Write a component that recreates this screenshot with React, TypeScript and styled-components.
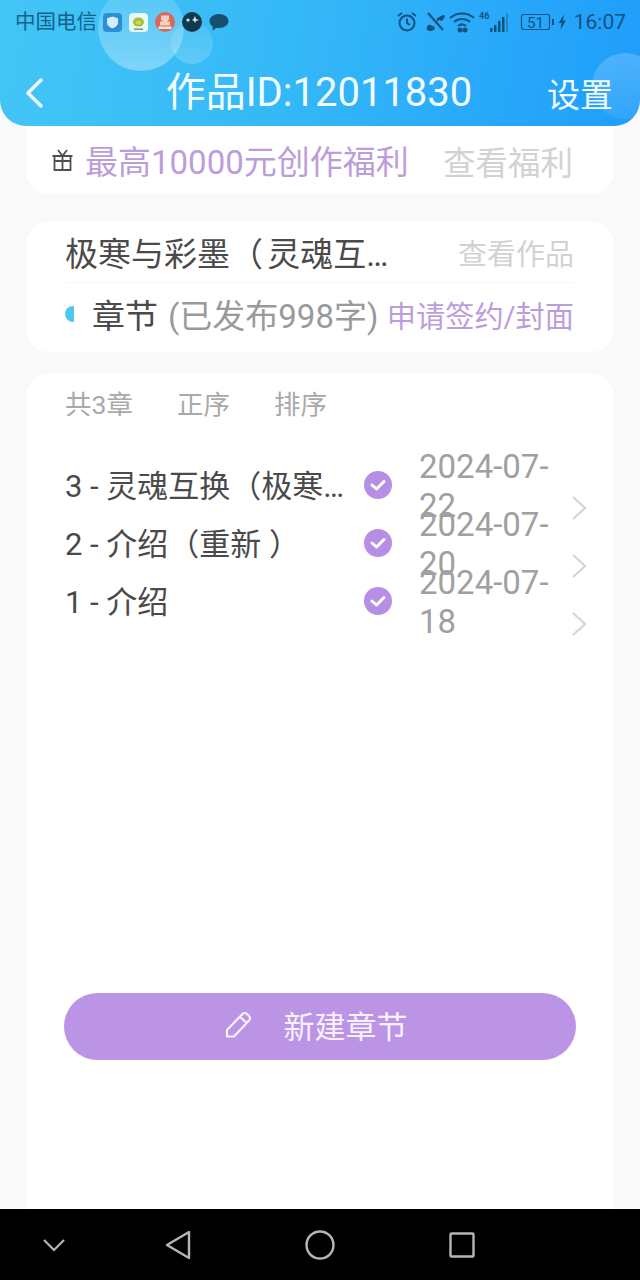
import { createGlobalStyle, styled } from 'styled-components';

const GlobalStyle = createGlobalStyle`
  html, body {
    margin: 0;
    padding: 0;
    background: #f9f9f9;
  }

  * {
    box-sizing: border-box;
  }
`;

const Page = styled.div`
  display: flex;
  flex-direction: column;
  width: 640px;
  height: 1280px;
  overflow: hidden;
  background: #f9f9f9;
  font-family: Roboto, 'Noto Sans CJK SC', sans-serif;
`;

const Header = styled.header`
  position: relative;
  z-index: 1;
  flex: none;
  height: 126px;
  overflow: hidden;
  border-radius: 0 0 26px 26px;
  background: linear-gradient(100deg, #43c6f5 0%, #35b8f7 45%, #1f9dfb 100%);
`;

const Bubble = styled.div<{ $size: number; $top: number; $left: number; $from: number; $to: number }>`
  position: absolute;
  top: ${(p) => p.$top}px;
  left: ${(p) => p.$left}px;
  width: ${(p) => p.$size}px;
  height: ${(p) => p.$size}px;
  border-radius: 50%;
  background: linear-gradient(180deg, rgba(255, 255, 255, ${(p) => p.$from}), rgba(255, 255, 255, ${(p) => p.$to}));
`;

const StatusBar = styled.div`
  position: relative;
  display: flex;
  align-items: center;
  height: 44px;
  padding: 0 14px 0 15px;
  color: #14618c;
`;

const Carrier = styled.span`
  margin-right: 6px;
  font-size: 20.500px;
  line-height: 42px;
`;

const AppIcons = styled.div`
  display: flex;
  align-items: center;
  gap: 7px;
`;

const StatusRight = styled.div`
  display: flex;
  align-items: center;
  margin-left: auto;
  color: #12527f;
`;

const Clock = styled.span`
  margin-left: 8px;
  font-size: 21px;
`;

const TitleRow = styled.div`
  position: relative;
  display: grid;
  grid-template-columns: 1fr auto 1fr;
  align-items: center;
  height: 48px;
  margin-top: 25px;
  padding: 0 27px 0 25px;
  color: #f2fbff;
`;

const Title = styled.h1`
  margin: 0;
  font-size: 40px;
  font-weight: 400;
  line-height: 48px;
`;

const Settings = styled.span`
  justify-self: end;
  font-size: 33px;
`;

const Card = styled.section`
  margin: 0 26px;
  border-radius: 24px;
  background: #fff;
`;

const BenefitCard = styled(Card)`
  display: flex;
  flex: none;
  align-items: center;
  height: 92px;
  margin-top: -24px;
  padding: 24px 41px 0 26px;
`;

const BenefitText = styled.span`
  margin-left: 12px;
  color: #bb9ddb;
  font-size: 33px;
  white-space: nowrap;
`;

const MutedLink = styled.span<{ $size: number }>`
  margin-left: auto;
  color: #d2d2d2;
  font-size: ${(p) => p.$size}px;
  white-space: nowrap;
`;

const WorkCard = styled(Card)`
  flex: none;
  height: 131px;
  margin-top: 27px;
  padding: 0 40px 0 39px;
`;

const WorkRow = styled.div`
  display: flex;
  align-items: center;
  height: 62px;
  border-bottom: 1px solid #f8f8f8;
`;

const WorkTitle = styled.span`
  color: #4a4a4a;
  font-size: 33px;
  word-spacing: -4px;
  white-space: nowrap;
`;

const ChapterRow = styled.div`
  display: flex;
  align-items: center;
  height: 62px;
  white-space: nowrap;
`;

const HalfDot = styled.span`
  width: 9px;
  height: 16px;
  border-radius: 8px 0 0 8px;
  background: #4fc8ee;
`;

const ChapterLabel = styled.span`
  margin-left: 18px;
  color: #4a4a4a;
  font-size: 33px;
`;

const ChapterCount = styled.span`
  margin-left: 10px;
  color: #9a9a9a;
  font-size: 33px;
`;

const SignLink = styled.span`
  margin-left: auto;
  color: #bb9ddb;
  font-size: 29.200px;
`;

const ChapterCard = styled(Card)`
  display: flex;
  flex: 1;
  flex-direction: column;
  margin-top: 21px;
  padding: 0 38px;
  border-bottom-left-radius: 0;
  border-bottom-right-radius: 0;
`;

const SortBar = styled.div`
  display: flex;
  align-items: center;
  gap: 44px;
  height: 58px;
  padding-left: 1px;
  color: #a9a9a9;
  font-size: 26.500px;
`;

const ChapterList = styled.div`
  display: flex;
  flex-direction: column;
  margin: 26px -12px 0 0;
`;

const ChapterItem = styled.div`
  display: flex;
  height: 58px;
  padding-left: 1px;
`;

const ChapterName = styled.span`
  flex: none;
  width: 299px;
  color: #4a4a4a;
  font-size: 31px;
  line-height: 60px;
  white-space: nowrap;
`;

const CheckBadge = styled.svg`
  flex: none;
  width: 28px;
  height: 28px;
  margin-top: 14px;
`;

const DateText = styled.span`
  flex: none;
  width: 138px;
  margin: -10px 0 0 27px;
  color: #a0a0a0;
  font-size: 33px;
  line-height: 39px;
`;

const Chevron = styled.svg`
  flex: none;
  width: 17px;
  height: 26px;
  margin: 38px 0 0 14px;
`;

const NewChapterButton = styled.button`
  display: flex;
  align-items: center;
  justify-content: center;
  gap: 31px;
  width: 512px;
  height: 67px;
  margin-top: auto;
  margin-bottom: 149px;
  padding: 0 8px 4px 0;
  border: 0;
  border-radius: 34px;
  background: #bc94e6;
  color: #f7f1fd;
  font-family: inherit;
  font-size: 31px;
`;

const NavBar = styled.nav`
  display: grid;
  flex: none;
  grid-template-columns: 107px 142px 142px 142px;
  align-items: center;
  justify-items: center;
  height: 71px;
  background: #000;
`;

const items = [
  { name: '3 - 灵魂互换（极寒…', date: '2024-07-22' },
  { name: '2 - 介绍（重新 ）', date: '2024-07-20' },
  { name: '1 - 介绍', date: '2024-07-18' },
];

const App = () => (
  <Page>
    <GlobalStyle />
    <Header>
      <Bubble $size={86} $top={-15} $left={98} $from={0.1} $to={0.34} />
      <Bubble $size={42} $top={22} $left={171} $from={0.08} $to={0.2} />
      <Bubble $size={66} $top={53} $left={592} $from={0.2} $to={0.08} />
      <StatusBar>
        <Carrier>中国电信</Carrier>
        <AppIcons>
          <svg width="19" height="19" viewBox="0 0 19 19">
            <rect width="19" height="19" rx="4" fill="#2c8fd6" />
            <path d="M9.500 3.500l5.500 1.800v4.200c0 3-2.600 4.800-5.500 5.800-2.900-1-5.500-2.800-5.500-5.800V5.300z" fill="#d6ecfa" />
          </svg>
          <svg width="19" height="19" viewBox="0 0 19 19">
            <rect width="19" height="19" rx="4" fill="#e8f8f4" />
            <ellipse cx="9.500" cy="9" rx="5.500" ry="4.500" fill="#9cc23e" />
            <ellipse cx="9.500" cy="9.500" rx="3" ry="2" fill="#e6c94a" />
            <rect x="5" y="15.500" width="9" height="1.300" fill="#5a8a70" />
          </svg>
          <svg width="20" height="20" viewBox="0 0 20 20">
            <circle cx="10" cy="10" r="10" fill="#d9695a" />
            <path d="M6 3.500h8v4l-2 2h3v4H5v-4h3l-2-2z" fill="#f3cfc4" />
            <rect x="3.500" y="14.500" width="13" height="2.500" fill="#f5e3dc" />
          </svg>
          <svg width="20" height="20" viewBox="0 0 20 20">
            <circle cx="10" cy="10" r="10" fill="#123a4c" />
            <circle cx="6" cy="8" r="1.600" fill="#cfe6ee" />
            <path d="M11.500 7l1.500-3 1 3 3 1-3 1-1 2-1-2-2-1z" fill="#cfe6ee" />
          </svg>
          <svg width="20" height="19" viewBox="0 0 20 19">
            <path d="M10 1c5.200 0 9.500 3 9.500 7s-4.300 7-9.500 7c-1 0-1.900-.1-2.800-.3L3.500 18l.4-4.200C1.800 12.400.5 10.400.5 8 .5 4 4.800 1 10 1z" fill="#17506e" />
          </svg>
        </AppIcons>
        <StatusRight>
          <svg width="22" height="22" viewBox="0 0 22 22" fill="none" stroke="currentColor" strokeWidth="2">
            <circle cx="11" cy="12" r="7.500" />
            <path d="M11 7.500V12l3 2M2 5l4-3M20 5l-4-3" />
          </svg>
          <svg width="24" height="22" viewBox="0 0 24 22" fill="none" stroke="currentColor" style={{ marginLeft: 6 }}>
            <path d="M4 2l15 17" strokeWidth="2.200" />
            <path d="M3 19c-1-3 1-6 3.500-5l3 1.500 4-5-1-2.500c2-2 6-4 8-4 1 1.500-1 5-3 6l-2.500-1L10 15l1 3c-2 2-5 3-8 1z" fill="currentColor" strokeWidth="0" />
          </svg>
          <svg width="26" height="22" viewBox="0 0 26 22" fill="none" stroke="currentColor" strokeWidth="2" style={{ marginLeft: 1 }}>
            <path d="M1 7c7-6 17-6 24 0M5 11c4.500-4 11.500-4 16 0M9 15c2.500-2 5.500-2 8 0" />
            <circle cx="11" cy="19" r="1.500" fill="currentColor" />
            <circle cx="16" cy="19" r="1.500" fill="currentColor" />
          </svg>
          <svg width="31" height="22" viewBox="0 0 31 22" fill="currentColor" style={{ marginLeft: 4 }}>
            <rect x="11" y="17" width="2.500" height="4" />
            <rect x="15" y="14" width="2.500" height="7" />
            <rect x="19" y="10" width="2.500" height="11" />
            <rect x="23" y="6" width="2.500" height="15" />
            <rect x="27" y="2" width="2" height="19" opacity="0.4" />
            <text x="0" y="8" fontSize="9" fontWeight="700" fontFamily="Roboto">46</text>
          </svg>
          <svg width="46" height="20" viewBox="0 0 46 20" fill="none" stroke="currentColor" style={{ marginLeft: 10 }}>
            <rect x="1.500" y="2.500" width="28" height="15" rx="2" strokeWidth="1.200" />
            <text x="7" y="15.500" fontSize="15" fill="currentColor" stroke="none" fontFamily="Roboto">51</text>
            <rect x="32" y="7" width="2" height="6" fill="currentColor" stroke="none" />
            <path d="M44 2.500l-5.500 8.500h3l-1 6.500 5.500-9h-3z" fill="currentColor" stroke="none" />
          </svg>
          <Clock>16:07</Clock>
        </StatusRight>
      </StatusBar>
      <TitleRow>
        <svg width="18" height="30" viewBox="0 0 18 30" fill="none" stroke="#eefaff" strokeWidth="3.500" strokeLinecap="round" strokeLinejoin="round">
          <path d="M16 2L3 15l13 13" />
        </svg>
        <Title>作品ID:12011830</Title>
        <Settings>设置</Settings>
      </TitleRow>
    </Header>

    <BenefitCard>
      <svg width="21" height="22" viewBox="0 0 21 22" fill="none" stroke="#4f4f4f" strokeWidth="1.800">
        <path d="M0.500 7h20M2.500 7v14h16V7M2.500 12h16M10.500 7v14M6 1l4.500 6L15 1" />
      </svg>
      <BenefitText>最高10000元创作福利</BenefitText>
      <MutedLink $size={32.500}>查看福利</MutedLink>
    </BenefitCard>

    <WorkCard>
      <WorkRow>
        <WorkTitle>极寒与彩墨（ 灵魂互…</WorkTitle>
        <MutedLink $size={29}>查看作品</MutedLink>
      </WorkRow>
      <ChapterRow>
        <HalfDot />
        <ChapterLabel>章节</ChapterLabel>
        <ChapterCount>(已发布998字)</ChapterCount>
        <SignLink>申请签约/封面</SignLink>
      </ChapterRow>
    </WorkCard>

    <ChapterCard>
      <SortBar>
        <span>共3章</span>
        <span>正序</span>
        <span>排序</span>
      </SortBar>
      <ChapterList>
        {items.map((item) => (
          <ChapterItem key={item.date}>
            <ChapterName>{item.name}</ChapterName>
            <CheckBadge viewBox="0 0 28 28">
              <circle cx="14" cy="14" r="14" fill="#b68fe4" />
              <path d="M8 14l4.500 4L20 10.500" fill="none" stroke="#fff" strokeWidth="3" strokeLinecap="round" strokeLinejoin="round" />
            </CheckBadge>
            <DateText>{item.date}</DateText>
            <Chevron viewBox="0 0 17 26" fill="none" stroke="#d4d4d4" strokeWidth="2.200">
              <path d="M2 2l12 11L2 24" />
            </Chevron>
          </ChapterItem>
        ))}
      </ChapterList>
      <NewChapterButton>
        <svg width="28" height="28" viewBox="0 0 28 28" fill="none" stroke="#f7f1fd" strokeWidth="2.200" strokeLinejoin="round">
          <path d="M2 25.500V19L17.500 3a3 3 0 0 1 4.500 0l2 2a3 3 0 0 1 0 4.500L9 25.500zM15 6l7 6" />
        </svg>
        新建章节
      </NewChapterButton>
    </ChapterCard>

    <NavBar>
      <svg width="24" height="14" viewBox="0 0 24 14" fill="none" stroke="#b5b5b5" strokeWidth="2.200">
        <path d="M2 2l10 10L22 2" />
      </svg>
      <svg width="26" height="30" viewBox="0 0 26 30" fill="none" stroke="#b5b5b5" strokeWidth="2.400" strokeLinejoin="round">
        <path d="M24 2v26L2 15z" />
      </svg>
      <svg width="30" height="30" viewBox="0 0 30 30" fill="none" stroke="#b5b5b5" strokeWidth="2.400">
        <circle cx="15" cy="15" r="13.500" />
      </svg>
      <svg width="26" height="26" viewBox="0 0 26 26" fill="none" stroke="#b5b5b5" strokeWidth="2.400" strokeLinejoin="round">
        <rect x="1.500" y="1.500" width="23" height="23" rx="1" />
      </svg>
    </NavBar>
  </Page>
);

export default App;
